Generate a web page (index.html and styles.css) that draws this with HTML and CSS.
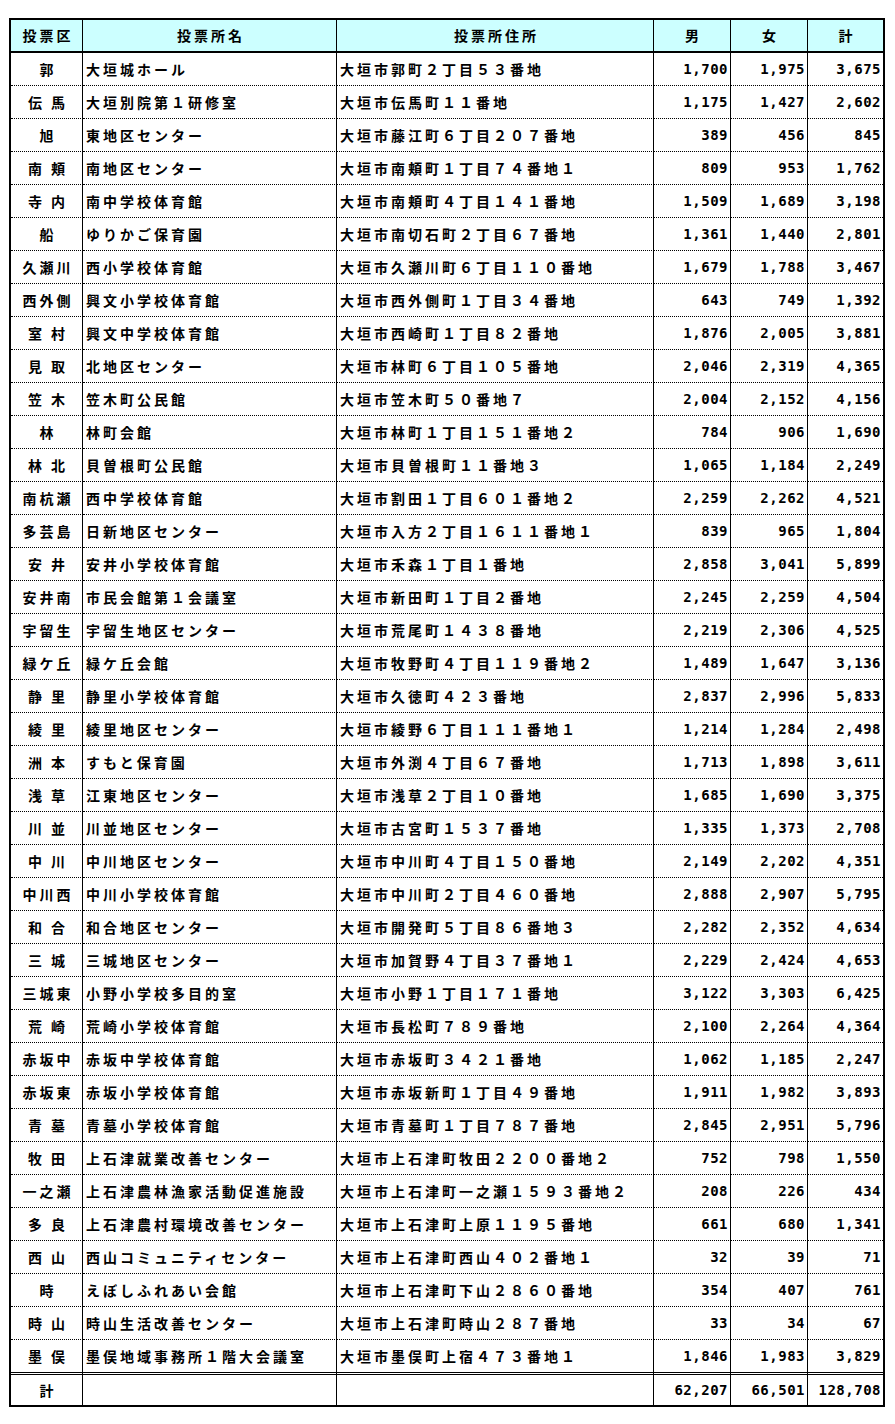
FILE: index.html
```html
<!DOCTYPE html>
<html lang="ja">
<head>
<meta charset="utf-8">
<title>投票所別当日有権者数</title>
<link rel="stylesheet" href="styles.css">
</head>
<body>
<div class="page">
<table class="tally">
<colgroup>
<col class="c-ward"><col class="c-name"><col class="c-addr"><col class="c-num"><col class="c-num"><col class="c-last">
</colgroup>
<thead>
<tr><th>投票区</th><th>投票所名</th><th>投票所住所</th><th>男</th><th>女</th><th>計</th></tr>
</thead>
<tbody>
<tr><td class="ward">郭</td><td class="name">大垣城ホール</td><td class="addr">大垣市郭町２丁目５３番地</td><td class="num">1,700</td><td class="num">1,975</td><td class="num">3,675</td></tr>
<tr><td class="ward">伝 馬</td><td class="name">大垣別院第１研修室</td><td class="addr">大垣市伝馬町１１番地</td><td class="num">1,175</td><td class="num">1,427</td><td class="num">2,602</td></tr>
<tr><td class="ward">旭</td><td class="name">東地区センター</td><td class="addr">大垣市藤江町６丁目２０７番地</td><td class="num">389</td><td class="num">456</td><td class="num">845</td></tr>
<tr><td class="ward">南 頬</td><td class="name">南地区センター</td><td class="addr">大垣市南頬町１丁目７４番地１</td><td class="num">809</td><td class="num">953</td><td class="num">1,762</td></tr>
<tr><td class="ward">寺 内</td><td class="name">南中学校体育館</td><td class="addr">大垣市南頬町４丁目１４１番地</td><td class="num">1,509</td><td class="num">1,689</td><td class="num">3,198</td></tr>
<tr><td class="ward">船</td><td class="name">ゆりかご保育園</td><td class="addr">大垣市南切石町２丁目６７番地</td><td class="num">1,361</td><td class="num">1,440</td><td class="num">2,801</td></tr>
<tr><td class="ward">久瀬川</td><td class="name">西小学校体育館</td><td class="addr">大垣市久瀬川町６丁目１１０番地</td><td class="num">1,679</td><td class="num">1,788</td><td class="num">3,467</td></tr>
<tr><td class="ward">西外側</td><td class="name">興文小学校体育館</td><td class="addr">大垣市西外側町１丁目３４番地</td><td class="num">643</td><td class="num">749</td><td class="num">1,392</td></tr>
<tr><td class="ward">室 村</td><td class="name">興文中学校体育館</td><td class="addr">大垣市西崎町１丁目８２番地</td><td class="num">1,876</td><td class="num">2,005</td><td class="num">3,881</td></tr>
<tr><td class="ward">見 取</td><td class="name">北地区センター</td><td class="addr">大垣市林町６丁目１０５番地</td><td class="num">2,046</td><td class="num">2,319</td><td class="num">4,365</td></tr>
<tr><td class="ward">笠 木</td><td class="name">笠木町公民館</td><td class="addr">大垣市笠木町５０番地７</td><td class="num">2,004</td><td class="num">2,152</td><td class="num">4,156</td></tr>
<tr><td class="ward">林</td><td class="name">林町会館</td><td class="addr">大垣市林町１丁目１５１番地２</td><td class="num">784</td><td class="num">906</td><td class="num">1,690</td></tr>
<tr><td class="ward">林 北</td><td class="name">貝曽根町公民館</td><td class="addr">大垣市貝曽根町１１番地３</td><td class="num">1,065</td><td class="num">1,184</td><td class="num">2,249</td></tr>
<tr><td class="ward">南杭瀬</td><td class="name">西中学校体育館</td><td class="addr">大垣市割田１丁目６０１番地２</td><td class="num">2,259</td><td class="num">2,262</td><td class="num">4,521</td></tr>
<tr><td class="ward">多芸島</td><td class="name">日新地区センター</td><td class="addr">大垣市入方２丁目１６１１番地１</td><td class="num">839</td><td class="num">965</td><td class="num">1,804</td></tr>
<tr><td class="ward">安 井</td><td class="name">安井小学校体育館</td><td class="addr">大垣市禾森１丁目１番地</td><td class="num">2,858</td><td class="num">3,041</td><td class="num">5,899</td></tr>
<tr><td class="ward">安井南</td><td class="name">市民会館第１会議室</td><td class="addr">大垣市新田町１丁目２番地</td><td class="num">2,245</td><td class="num">2,259</td><td class="num">4,504</td></tr>
<tr><td class="ward">宇留生</td><td class="name">宇留生地区センター</td><td class="addr">大垣市荒尾町１４３８番地</td><td class="num">2,219</td><td class="num">2,306</td><td class="num">4,525</td></tr>
<tr><td class="ward">緑ケ丘</td><td class="name">緑ケ丘会館</td><td class="addr">大垣市牧野町４丁目１１９番地２</td><td class="num">1,489</td><td class="num">1,647</td><td class="num">3,136</td></tr>
<tr><td class="ward">静 里</td><td class="name">静里小学校体育館</td><td class="addr">大垣市久徳町４２３番地</td><td class="num">2,837</td><td class="num">2,996</td><td class="num">5,833</td></tr>
<tr><td class="ward">綾 里</td><td class="name">綾里地区センター</td><td class="addr">大垣市綾野６丁目１１１番地１</td><td class="num">1,214</td><td class="num">1,284</td><td class="num">2,498</td></tr>
<tr><td class="ward">洲 本</td><td class="name">すもと保育園</td><td class="addr">大垣市外渕４丁目６７番地</td><td class="num">1,713</td><td class="num">1,898</td><td class="num">3,611</td></tr>
<tr><td class="ward">浅 草</td><td class="name">江東地区センター</td><td class="addr">大垣市浅草２丁目１０番地</td><td class="num">1,685</td><td class="num">1,690</td><td class="num">3,375</td></tr>
<tr><td class="ward">川 並</td><td class="name">川並地区センター</td><td class="addr">大垣市古宮町１５３７番地</td><td class="num">1,335</td><td class="num">1,373</td><td class="num">2,708</td></tr>
<tr><td class="ward">中 川</td><td class="name">中川地区センター</td><td class="addr">大垣市中川町４丁目１５０番地</td><td class="num">2,149</td><td class="num">2,202</td><td class="num">4,351</td></tr>
<tr><td class="ward">中川西</td><td class="name">中川小学校体育館</td><td class="addr">大垣市中川町２丁目４６０番地</td><td class="num">2,888</td><td class="num">2,907</td><td class="num">5,795</td></tr>
<tr><td class="ward">和 合</td><td class="name">和合地区センター</td><td class="addr">大垣市開発町５丁目８６番地３</td><td class="num">2,282</td><td class="num">2,352</td><td class="num">4,634</td></tr>
<tr><td class="ward">三 城</td><td class="name">三城地区センター</td><td class="addr">大垣市加賀野４丁目３７番地１</td><td class="num">2,229</td><td class="num">2,424</td><td class="num">4,653</td></tr>
<tr><td class="ward">三城東</td><td class="name">小野小学校多目的室</td><td class="addr">大垣市小野１丁目１７１番地</td><td class="num">3,122</td><td class="num">3,303</td><td class="num">6,425</td></tr>
<tr><td class="ward">荒 崎</td><td class="name">荒崎小学校体育館</td><td class="addr">大垣市長松町７８９番地</td><td class="num">2,100</td><td class="num">2,264</td><td class="num">4,364</td></tr>
<tr><td class="ward">赤坂中</td><td class="name">赤坂中学校体育館</td><td class="addr">大垣市赤坂町３４２１番地</td><td class="num">1,062</td><td class="num">1,185</td><td class="num">2,247</td></tr>
<tr><td class="ward">赤坂東</td><td class="name">赤坂小学校体育館</td><td class="addr">大垣市赤坂新町１丁目４９番地</td><td class="num">1,911</td><td class="num">1,982</td><td class="num">3,893</td></tr>
<tr><td class="ward">青 墓</td><td class="name">青墓小学校体育館</td><td class="addr">大垣市青墓町１丁目７８７番地</td><td class="num">2,845</td><td class="num">2,951</td><td class="num">5,796</td></tr>
<tr><td class="ward">牧 田</td><td class="name">上石津就業改善センター</td><td class="addr">大垣市上石津町牧田２２００番地２</td><td class="num">752</td><td class="num">798</td><td class="num">1,550</td></tr>
<tr><td class="ward">一之瀬</td><td class="name">上石津農林漁家活動促進施設</td><td class="addr">大垣市上石津町一之瀬１５９３番地２</td><td class="num">208</td><td class="num">226</td><td class="num">434</td></tr>
<tr><td class="ward">多 良</td><td class="name">上石津農村環境改善センター</td><td class="addr">大垣市上石津町上原１１９５番地</td><td class="num">661</td><td class="num">680</td><td class="num">1,341</td></tr>
<tr><td class="ward">西 山</td><td class="name">西山コミュニティセンター</td><td class="addr">大垣市上石津町西山４０２番地１</td><td class="num">32</td><td class="num">39</td><td class="num">71</td></tr>
<tr><td class="ward">時</td><td class="name">えぼしふれあい会館</td><td class="addr">大垣市上石津町下山２８６０番地</td><td class="num">354</td><td class="num">407</td><td class="num">761</td></tr>
<tr><td class="ward">時 山</td><td class="name">時山生活改善センター</td><td class="addr">大垣市上石津町時山２８７番地</td><td class="num">33</td><td class="num">34</td><td class="num">67</td></tr>
<tr><td class="ward">墨 俣</td><td class="name">墨俣地域事務所１階大会議室</td><td class="addr">大垣市墨俣町上宿４７３番地１</td><td class="num">1,846</td><td class="num">1,983</td><td class="num">3,829</td></tr>
</tbody>
<tfoot>
<tr><td class="ward">計</td><td class="name"></td><td class="addr"></td><td class="num">62,207</td><td class="num">66,501</td><td class="num">128,708</td></tr>
</tfoot>
</table>
</div>
</body>
</html>
```

FILE: styles.css
```css
html, body {
  margin: 0;
  padding: 0;
  background: #ffffff;
}

.page {
  padding: 18px 0 0 9px;
}

.tally {
  border-collapse: separate;
  border-spacing: 0;
  border: 2px solid #000000;
  width: 876px;
  table-layout: fixed;
  font-family: "Noto Sans CJK JP", "Noto Sans CJK SC", sans-serif;
  font-weight: bold;
  font-size: 14px;
  color: #000000;
}

.c-ward { width: 72px; }
.c-name { width: 254px; }
.c-addr { width: 317px; }
.c-num { width: 77px; }
.c-last { width: 75px; }

.tally th,
.tally td {
  padding: 0;
  white-space: nowrap;
  overflow: hidden;
  border-right: 1px solid #000000;
  box-sizing: border-box;
}

.tally th:last-child,
.tally td:last-child {
  border-right: 0;
}

.tally th {
  background: #ccffff;
  font-weight: bold;
  text-align: center;
  line-height: 31px;
  letter-spacing: 3px;
  padding-left: 3px;
  border-bottom: 2px solid #000000;
}

.tally tbody td {
  line-height: 32px;
  border-bottom: 1px dotted #000000;
}

.tally tbody tr:last-child td {
  border-bottom: 0;
}

.tally tfoot td {
  line-height: 30px;
  border-top: 3px double #000000;
}

.ward {
  text-align: center;
  letter-spacing: 3px;
  padding-left: 3px !important;
}

.name,
.addr {
  text-align: left;
  letter-spacing: 3px;
  padding-left: 3px !important;
}

.num {
  text-align: right;
  font-family: "DejaVu Sans Mono", "Liberation Mono", monospace;
  font-size: 14px;
  letter-spacing: 0.5px;
  padding-right: 2px !important;
}
```
